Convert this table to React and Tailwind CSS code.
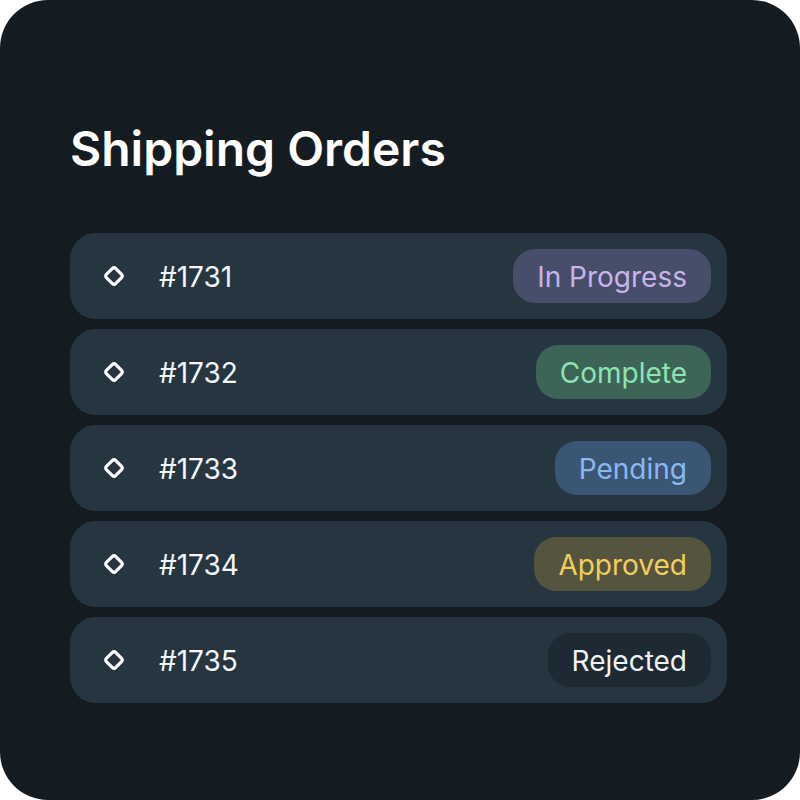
const orders = [
  { id: '#1731', status: 'In Progress', badge: 'bg-[#474e69] text-[#c9b3ea]' },
  { id: '#1732', status: 'Complete', badge: 'bg-[#3c6558] text-[#8ee4b1]' },
  { id: '#1733', status: 'Pending', badge: 'bg-[#3a5674] text-[#8ab8f0]' },
  { id: '#1734', status: 'Approved', badge: 'bg-[#55553f] text-[#f2cf5a]' },
  { id: '#1735', status: 'Rejected', badge: 'bg-[#1e2a33] text-[#f1f3f5]' },
];

const DiamondIcon = () => (
  <svg width="20" height="20" viewBox="0 0 20 20" fill="none" className="shrink-0">
    <path
      d="M8.4 2.4a2.2 2.2 0 0 1 3.2 0l6 6a2.2 2.2 0 0 1 0 3.2l-6 6a2.2 2.2 0 0 1-3.2 0l-6-6a2.2 2.2 0 0 1 0-3.2Z"
      stroke="white"
      strokeWidth="3.2"
      strokeLinejoin="round"
    />
  </svg>
);

const OrderRow = ({ order }) => (
  <div className="flex items-center h-[86px] rounded-[26px] bg-[#263640] pl-[34px] pr-4">
    <DiamondIcon />
    <span className="ml-[35px] pt-[2px] text-[28px] text-[#f3f5f7]">{order.id}</span>
    <span className={`ml-auto h-[54px] flex items-center pt-[2px] px-6 rounded-[22px] text-[28px] ${order.badge}`}>
      {order.status}
    </span>
  </div>
);

export default function App() {
  return (
    <div className="w-[800px] h-[800px] bg-white" style={{ fontFamily: 'Inter, "Noto Sans", sans-serif' }}>
      <div className="w-full h-full rounded-[48px] bg-[#141c22] pl-[70px] pr-[73px] pt-[117px]">
        <h1 className="text-[48px] leading-[64px] font-semibold text-white">Shipping Orders</h1>
        <div className="mt-[52px] flex flex-col gap-[10px]">
          {orders.map((o) => (
            <OrderRow key={o.id} order={o} />
          ))}
        </div>
      </div>
    </div>
  );
}
